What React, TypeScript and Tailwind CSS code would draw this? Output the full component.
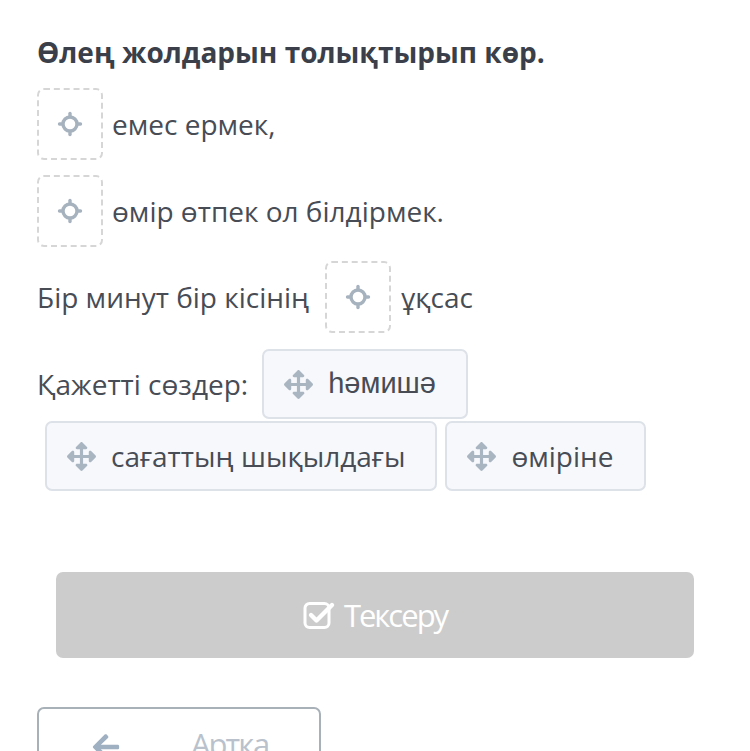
import React from "react";
import { FaArrowsAlt, FaArrowLeft } from "react-icons/fa";

function Crosshair() {
  return (
    <svg width="26" height="26" viewBox="0 0 26 26" fill="none" stroke="#a6b2be" strokeWidth="3.4" strokeLinecap="round">
      <circle cx="13" cy="13" r="7" />
      <line x1="13" y1="2.5" x2="13" y2="5.5" />
      <line x1="13" y1="20.5" x2="13" y2="23.5" />
      <line x1="2.5" y1="13" x2="5.5" y2="13" />
      <line x1="20.5" y1="13" x2="23.5" y2="13" />
    </svg>
  );
}

function CheckSquare() {
  return (
    <svg width="33" height="30" viewBox="0 0 33 30" fill="none">
      <rect x="2" y="3.5" width="24" height="24" rx="4.5" stroke="white" strokeWidth="3" />
      <path d="M8 15 L13.5 20.5 L29 5" stroke="white" strokeWidth="4.4" strokeLinecap="round" strokeLinejoin="round" />
    </svg>
  );
}

function Drop() {
  return (
    <div className="w-[66px] h-[72px] shrink-0 rounded-[7px] border-2 border-dashed border-[#d6d6d6] flex items-center justify-center">
      <Crosshair />
    </div>
  );
}

function Chip({ label, font }: { label: string; font?: string }) {
  return (
    <div className="h-[70px] mx-[4px] my-[1px] pl-[20px] pr-[30px] rounded-[7px] border-2 border-[#dde2e8] bg-[#f6f8fc] flex items-center gap-[15px]">
      <FaArrowsAlt className="text-[#a9b5c1]" size={29} />
      <span className={font}>{label}</span>
    </div>
  );
}

export default function App() {
  return (
    <div className="w-[750px] h-[751px] overflow-hidden bg-white text-[#474c55] font-['Open_Sans',sans-serif] text-[28px]">
      <div className="pl-[37px] pr-[20px] pt-[32px]">
        <h1 className="font-bold text-[28px] text-[#3a3f49] leading-[40px]">Өлең жолдарын толықтырып көр.</h1>
        <div className="mt-[16px] flex flex-col gap-[15px]">
          <div className="flex items-center gap-[9px]">
            <Drop />
            <span>емес ермек,</span>
          </div>
          <div className="flex items-center gap-[9px]">
            <Drop />
            <span>өмір өтпек ол білдірмек.</span>
          </div>
          <div className="flex items-center gap-[10px] -mt-[1px]">
            <span className="mr-[6px]">Бір минут бір кісінің</span>
            <Drop />
            <span>ұқсас</span>
          </div>
        </div>
        <div className="mt-[15px] flex flex-wrap items-center">
          <span className="mr-[10px]">Қажетті сөздер:</span>
          <Chip label="һәмишә" font="font-['Liberation_Sans',sans-serif] text-[29px]" />
        </div>
        <div className="flex flex-wrap items-center ml-[4px]">
          <Chip label="сағаттың шықылдағы" />
          <Chip label="өміріне" />
        </div>
        <div className="mt-[80px] ml-[19px] w-[638px] h-[86px] rounded-[7px] bg-[#cccccc] flex items-center justify-center gap-[8px] text-white text-[31px] tracking-[-2px]">
          <CheckSquare />
          <span>Тексеру</span>
        </div>
        <div className="mt-[49px] w-[284px] h-[80px] rounded-[7px] border-2 border-[#a8b0b8] flex items-start pt-[15px] pl-[52px] gap-[70px] text-[#b9c2cc] text-[31px]">
          <FaArrowLeft className="text-[#9fb0c2] mt-[8px]" size={30} />
          <span className="tracking-[-2px] leading-[40px]">Артқа</span>
        </div>
      </div>
    </div>
  );
}
